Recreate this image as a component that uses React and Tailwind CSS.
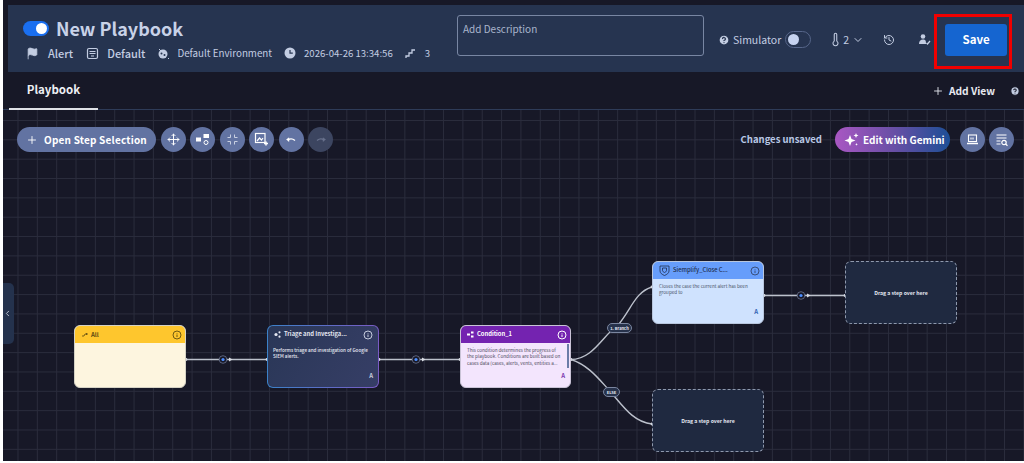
import React from "react";
import {
  Plus,
  Move,
  ChevronDown,
  History,
  Thermometer,
  CircleHelp,
  ChevronLeft,
  Flag,
} from "lucide-react";

const fontStack = "font-['Noto_Sans_CJK_JP','Noto_Sans',sans-serif]";

const RoundButton = ({ children, dim }) => (
  <button
    className={`flex h-[25px] w-[25px] items-center justify-center rounded-full ${
      dim ? "bg-[#3c4560] text-[#69728c]" : "bg-[#6273a2] text-white"
    }`}
  >
    {children}
  </button>
);

const InfoDot = ({ color }) => (
  <svg width="10" height="10" viewBox="0 0 10 10" fill="none" stroke={color} strokeWidth="1">
    <circle cx="5" cy="5" r="4" />
    <path d="M5 4.500v2.500M5 3v.6" />
  </svg>
);

const Flow = () => (
  <svg className="absolute inset-0 h-full w-full" viewBox="0 0 1021 351" fill="none">
    <g stroke="#bcc1cc" strokeWidth="1.400">
      <path d="M183 249.500H264" />
      <path d="M376 249.500H457" />
      <path d="M568 249.500C590 249.500 600 225 615 215C628 200 632 182 649 177" />
      <path d="M568 249.500C585 255 595 268 606 280C620 296 630 312 649 314" />
      <path d="M761 185.500H842" />
    </g>
    {[
      [220, 249.5],
      [413, 249.5],
      [798, 185.5],
    ].map(([x, y]) => (
      <g key={x}>
        <circle cx={x} cy={y} r="3.800" fill="#171827" stroke="#6c7590" strokeWidth="0.800" />
        <circle cx={x} cy={y} r="1.600" fill="#4b8dff" />
        <path d={`M${x + 6} ${y - 2}l3.500 2l-3.500 2z`} fill="#d8dbe3" />
      </g>
    ))}
    {[
      [183, 249.5],
      [264, 249.5],
      [376, 249.5],
      [457, 249.5],
      [568, 249.5],
      [649, 177],
      [649, 314],
      [761, 185.5],
      [842, 185.5],
    ].map(([x, y]) => (
      <circle key={`${x}-${y}`} cx={x} cy={y} r="1.400" fill="#d5d8e0" />
    ))}
  </svg>
);

const DropZone = ({ className }) => (
  <div
    className={`absolute flex h-[63px] w-[112px] items-center justify-center rounded-[6px] border border-dashed border-[#8f99ad] bg-[#1f2940] text-[5.200px] font-bold text-[#e4e7f0] ${className}`}
  >
    Drag a step over here
  </div>
);

const EdgeLabel = ({ className, children }) => (
  <div
    className={`absolute flex h-[10px] items-center justify-center rounded-full border border-[#7b86a0] bg-[#27324b] text-[4px] font-bold text-[#e2e6f0] ${className}`}
  >
    {children}
  </div>
);

export default function App() {
  return (
    <div className={`h-[463px] w-[1024px] overflow-hidden bg-white pb-[2px] pl-[3px] ${fontStack}`}>
      <div className="flex h-full flex-col bg-[#171827]">
        <header className="ml-[5px] mt-[5px] flex h-[67px] shrink-0 items-start bg-[#263450]">
          <div className="w-[449px] shrink-0 pl-[15px] pt-[10px]">
            <div className="flex items-center gap-[7px]">
              <div className="flex h-[15px] w-[26px] items-center justify-end rounded-full bg-[#1a6ff0] pr-[2px]">
                <div className="h-[11px] w-[11px] rounded-full bg-white" />
              </div>
              <span className="text-[18px] font-bold leading-[26px] text-[#c8d2e8]">New Playbook</span>
            </div>
            <div className="mt-[4px] flex items-center pl-[3px] text-[#c3cde2]">
              <Flag size={13} fill="currentColor" strokeWidth={1.500} />
              <span className="ml-[9px] text-[11px] font-medium">Alert</span>
              <svg className="ml-[13px]" width="13" height="13" viewBox="0 0 13 13" fill="none" stroke="currentColor" strokeWidth="1.200">
                <rect x="1.500" y="1.500" width="10" height="10" rx="1.500" />
                <path d="M3.500 4.500h6M3.500 6.500h6M5 9h3" />
              </svg>
              <span className="ml-[8px] text-[11px] font-medium">Default</span>
              <svg className="ml-[12px]" width="13" height="13" viewBox="0 0 13 13" fill="currentColor">
                <circle cx="6" cy="7" r="4.500" />
                <circle cx="4.500" cy="6.500" r="1" fill="#263450" />
                <circle cx="7.500" cy="8" r="1" fill="#263450" />
                <path d="M2 2l2 2M11 11l1 1" stroke="currentColor" />
              </svg>
              <span className="ml-[7px] text-[9.800px]">Default Environment</span>
              <svg className="ml-[12px]" width="12" height="12" viewBox="0 0 12 12">
                <circle cx="6" cy="6" r="5.500" fill="currentColor" />
                <path d="M6 3v3.200h2.800" fill="none" stroke="#263450" strokeWidth="1.200" />
              </svg>
              <span className="ml-[8px] text-[9.600px]">2026-04-26 13:34:56</span>
              <svg className="ml-[12px]" width="11" height="11" viewBox="0 0 11 11" fill="none" stroke="currentColor" strokeWidth="1.300">
                <path d="M1 10V8h3V5h3V2h3" />
              </svg>
              <span className="ml-[9px] text-[9.600px]">3</span>
            </div>
          </div>
          <div className="mt-[10px] h-[41px] w-[247px] shrink-0 rounded-[3px] border border-[#7886a3] px-[5px] py-[5px] text-[10px] leading-[16px] text-[#a9b5cc]">
            Add Description
          </div>
          <div className="ml-[14px] mt-[26px] flex items-center text-[#c3cde2]">
            <CircleHelp size={12} fill="#c3cde2" stroke="#263450" strokeWidth={2.500} />
            <span className="ml-[3px] text-[10.500px]">Simulator</span>
            <div className="ml-[4px] flex h-[17px] w-[26px] items-center rounded-full border border-[#56668a] pl-[2px]">
              <div className="h-[11px] w-[11px] rounded-full bg-[#c6d3f0]" />
            </div>
            <Thermometer className="ml-[17px]" size={15} strokeWidth={1.700} />
            <span className="text-[10.500px]">2</span>
            <ChevronDown className="ml-[3px]" size={12} />
            <History className="ml-[19px]" size={12} strokeWidth={2} />
            <svg className="ml-[23px]" width="13" height="13" viewBox="0 0 13 13" fill="currentColor">
              <circle cx="5" cy="3.500" r="2.300" />
              <path d="M1 11c0-3 1.500-4.500 4-4.500s3 1 3 4.500z" />
              <path d="M8.500 10l1 1l2.500-3" fill="none" stroke="currentColor" strokeWidth="1.300" />
            </svg>
          </div>
          <button className="ml-[14px] mt-[19px] h-[32px] w-[62px] rounded-[3px] bg-[#1565d0] text-[11.500px] font-bold text-white">
            Save
          </button>
        </header>

        <nav className="flex h-[38px] shrink-0 items-stretch justify-between border-b border-[#2e3b58] pl-[6px] pr-[4px]">
          <div className="-mb-px flex w-[89px] items-center justify-center border-b-2 border-[#dfe1e6] text-[11.500px] font-bold text-[#eef0f5]">
            Playbook
          </div>
          <div className="flex items-center text-[#e7e9f0]">
            <Plus size={12} strokeWidth={1.800} />
            <span className="ml-[5px] text-[10.200px] font-bold">Add View</span>
            <CircleHelp className="ml-[15px]" size={10} fill="#c3cde2" stroke="#171827" strokeWidth={2.500} />
          </div>
        </nav>

        <main className="relative min-h-0 flex-1 overflow-hidden bg-[#171827] bg-[linear-gradient(#2a2c3c_1px,transparent_1px),linear-gradient(90deg,#2a2c3c_1px,transparent_1px)] bg-[length:19.350px_19.350px] bg-[position:14.500px_10px]">
          <Flow />

          <div className="relative flex items-center justify-between pl-[14px] pr-[10px] pt-[17px]">
            <div className="flex items-center gap-[4.500px]">
              <button className="flex h-[25px] w-[139px] items-center justify-center gap-[6px] rounded-full bg-[#6273a2] text-[10px] font-bold tracking-[0.2px] text-white">
                <Plus size={12} strokeWidth={1.800} />
                Open Step Selection
              </button>
              <RoundButton><Move size={13} strokeWidth={1.800} /></RoundButton>
              <RoundButton>
                <svg width="13" height="13" viewBox="0 0 13 13" fill="none" stroke="currentColor">
                  <rect x="0.500" y="5" width="4" height="3" fill="currentColor" />
                  <rect x="8" y="1.500" width="4.500" height="3" fill="currentColor" />
                  <circle cx="10" cy="9.500" r="2" />
                </svg>
              </RoundButton>
              <RoundButton>
                <svg width="13" height="13" viewBox="0 0 13 13" fill="none" stroke="#c9d0e2" strokeWidth="1">
                  <path d="M4.500 1.500v3h-3M8.500 1.500v3h3M4.500 11.500v-3h-3M8.500 11.500v-3h3" />
                </svg>
              </RoundButton>
              <RoundButton>
                <svg width="15" height="15" viewBox="0 0 15 15" fill="none" stroke="currentColor" strokeWidth="1.200">
                  <rect x="1.500" y="1.500" width="9.500" height="9" />
                  <path d="M3 9l2.500-3l2 2l1.500-2" />
                  <path d="M12 9.500v4M10 11.500h4" strokeWidth="1.500" />
                </svg>
              </RoundButton>
              <RoundButton>
                <svg width="12" height="12" viewBox="0 0 12 12" fill="none" stroke="currentColor" strokeWidth="1.400">
                  <path d="M3 6c2-1.500 4.500-1.500 7 .5" />
                  <path d="M4 3.800L1.500 5.500L4 7.500z" fill="currentColor" strokeWidth="0.500" />
                </svg>
              </RoundButton>
              <RoundButton dim>
                <svg width="12" height="12" viewBox="0 0 12 12" fill="none" stroke="currentColor" strokeWidth="1.400">
                  <path d="M9 6c-2-1.500-4.500-1.500-7 .5" />
                  <path d="M8 3.800l2.500 1.700L8 7.500z" fill="currentColor" strokeWidth="0.500" />
                </svg>
              </RoundButton>
            </div>
            <div className="flex items-center">
              <span className="text-[9.500px] font-bold text-[#b9c8e6]">Changes unsaved</span>
              <button className="ml-[13px] flex h-[25px] w-[115px] items-center rounded-full bg-[linear-gradient(90deg,#a957c3_0%,#6a4fa6_50%,#1d4f96_100%)] pl-[9px] text-[10px] font-bold text-white">
                <svg width="15" height="15" viewBox="0 0 15 15" fill="currentColor">
                  <path d="M6 3l1.500 4L11.500 8.500L7.500 10L6 14L4.500 10L.5 8.500L4.500 7z" />
                  <path d="M12 1l.7 1.800l1.800.7l-1.800.7L12 6l-.7-1.800l-1.800-.7l1.800-.7zM12.500 11l.4 1l1 .4l-1 .4l-.4 1l-.4-1l-1-.4l1-.4z" />
                </svg>
                <span className="ml-[4px]">Edit with Gemini</span>
              </button>
              <span className="ml-[10px]" />
              <RoundButton>
                <svg width="13" height="13" viewBox="0 0 13 13" fill="none" stroke="currentColor" strokeWidth="1.100">
                  <rect x="2.500" y="2" width="8" height="6.500" />
                  <path d="M1 10.500h11" strokeWidth="1.500" />
                  <path d="M5 6.500v-2M7 6.500v-2" />
                </svg>
              </RoundButton>
              <span className="ml-[4px]" />
              <RoundButton>
                <svg width="14" height="14" viewBox="0 0 14 14" fill="none" stroke="currentColor" strokeWidth="1.200">
                  <path d="M1.500 2h10M1.500 5h10M1.500 8h4M1.500 11h4" />
                  <circle cx="9" cy="9.500" r="2.200" />
                  <path d="M10.500 11l2 1.800" />
                </svg>
              </RoundButton>
            </div>
          </div>

          <div className="absolute left-0 top-[173px] flex h-[61px] w-[11px] items-center rounded-r-[5px] bg-[#24324d] text-[#dfe3ec]">
            <ChevronLeft size={9} strokeWidth={2} />
          </div>

          {/* All trigger */}
          <div className="absolute left-[71px] top-[215px] h-[63px] w-[112px] overflow-hidden rounded-[6px] border border-[#d5d2c4] bg-[#fdf5df]">
            <div className="flex h-[17px] items-center justify-between bg-[#fec62d] pl-[7px] pr-[3px] text-[#5b4a12]">
              <span className="flex items-center gap-[3px] text-[6px] font-bold">
                <svg width="6" height="6" viewBox="0 0 6 6" fill="none" stroke="currentColor" strokeWidth="0.800">
                  <path d="M0 4h2l1-2h3M4.500 1v2" />
                </svg>
                All
              </span>
              <InfoDot color="#6f5a12" />
            </div>
          </div>

          {/* Triage block */}
          <div className="absolute left-[264px] top-[215px] h-[63px] w-[112px] rounded-[6px] bg-[linear-gradient(90deg,#3b82c9,#7a5bc4)] p-px">
            <div className="relative h-full rounded-[5px] bg-[linear-gradient(120deg,#2a3757,#363e66)] px-[5px]">
              <div className="flex h-[17px] items-center justify-between text-[#e5e8f2]">
                <span className="flex items-center gap-[3px] pl-[1px] text-[5.800px] font-bold">
                  <svg width="7" height="7" viewBox="0 0 7 7" fill="currentColor">
                    <circle cx="2" cy="3.500" r="1.600" />
                    <circle cx="5.500" cy="1.300" r="1.100" />
                    <circle cx="5.500" cy="5.700" r="1.100" />
                  </svg>
                  Triage and Investiga...
                </span>
                <InfoDot color="#c5cbdc" />
              </div>
              <p className="mt-[3.500px] text-[4.600px] font-medium leading-[6.500px] text-[#e5e8f2]">
                Performs triage and investigation of Google SIEM alerts.
              </p>
              <span className="absolute bottom-[7px] right-[5px] text-[6px] font-bold text-[#c5cbdc]">A</span>
            </div>
          </div>

          {/* Condition block */}
          <div className="absolute left-[457px] top-[215px] h-[63px] w-[111px] overflow-hidden rounded-[6px] border border-[#c9c3d6] bg-[#f3e5fd]">
            <div className="flex h-[17px] items-center justify-between bg-[#7423b0] pl-[6px] pr-[3px] text-white">
              <span className="flex items-center gap-[3px] text-[5.800px] font-bold">
                <svg width="7" height="7" viewBox="0 0 7 7" fill="currentColor">
                  <rect x="0" y="2.500" width="3" height="2" />
                  <rect x="4" y="0.500" width="2.500" height="2" />
                  <rect x="4" y="4.500" width="2.500" height="2" />
                </svg>
                Condition_1
              </span>
              <InfoDot color="#ffffff" />
            </div>
            <p className="mt-[3.500px] pl-[6px] pr-[6px] text-[4.600px] leading-[6.800px] text-[#4d4a5c]">
              This condition determines the progress of<br />
              the playbook. Conditions are built based on<br />
              cases data (cases, alerts, vents, entities a...
            </p>
            <span className="absolute bottom-[7px] right-[5px] text-[6px] font-bold text-[#7a3bb0]">A</span>
            <div className="absolute right-[1px] top-[18px] h-[24px] w-[2px] bg-[#6b7ca8]" />
          </div>

          {/* Close case block */}
          <div className="absolute left-[649px] top-[151px] h-[63px] w-[112px] overflow-hidden rounded-[6px] border border-[#b8c6dd] bg-[#cfe2fe]">
            <div className="flex h-[17px] items-center justify-between bg-[#669dfb] pl-[6px] pr-[3px] text-[#1f2d4d]">
              <span className="flex items-center gap-[3px] text-[5.800px] font-medium">
                <svg width="11" height="11" viewBox="0 0 11 11" fill="none" stroke="currentColor" strokeWidth="0.800">
                  <path d="M1 1h9v5c0 2-2 3.500-4.500 4.500C3 9.500 1 8 1 6z" />
                  <path d="M3.500 3h4v2.500c0 1-1 1.500-2 2c-1-.5-2-1-2-2z" />
                </svg>
                Siemplify_Close C...
              </span>
              <InfoDot color="#3a507c" />
            </div>
            <p className="mt-[3.500px] px-[6px] text-[4.600px] leading-[6.800px] text-[#4a5468]">
              Closes the case the current alert has been grouped to
            </p>
            <span className="absolute bottom-[7px] right-[5px] text-[6px] font-bold text-[#3464b4]">A</span>
          </div>

          <DropZone className="left-[842px] top-[151px]" />
          <DropZone className="left-[649px] top-[279px]" />

          <EdgeLabel className="left-[604px] top-[213px] w-[25px]">1. Branch</EdgeLabel>
          <EdgeLabel className="left-[600px] top-[277px] w-[17px]">ELSE</EdgeLabel>
        </main>
      </div>

      {/* red highlight drawn on top of the screenshot */}
      <div className="pointer-events-none absolute left-[934px] top-[14px] h-[55px] w-[78px] border-[3px] border-[#f00000]" />
    </div>
  );
}
